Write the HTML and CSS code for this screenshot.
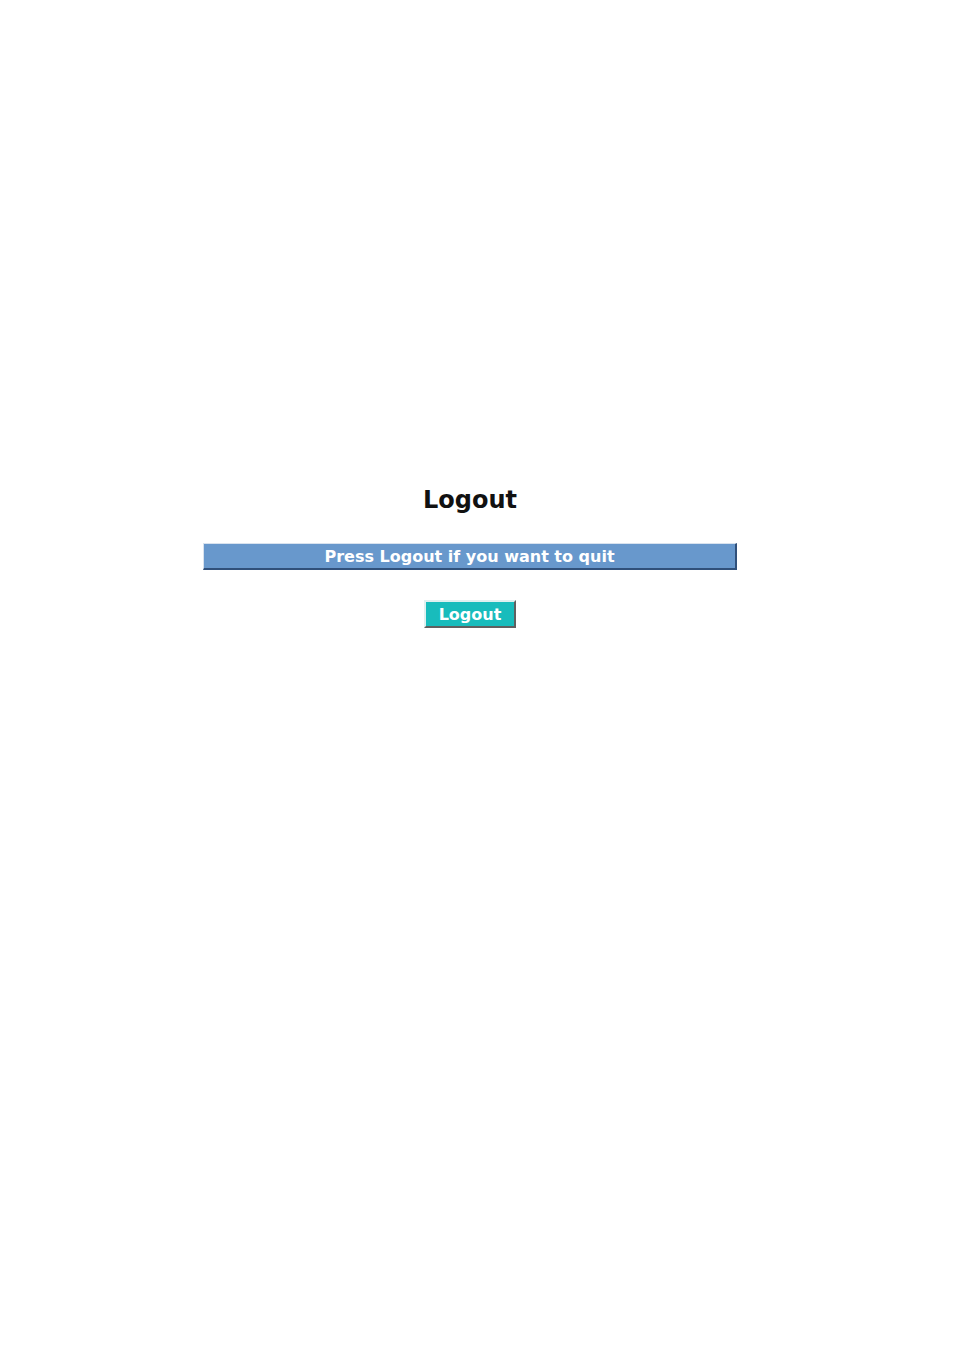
FILE: index.html
```html
<!DOCTYPE html>
<html>
<head>
<meta charset="utf-8">
<link rel="stylesheet" href="styles.css">
</head>
<body>
<div class="panel">
  <h1 class="title">Logout</h1>
  <div class="bar">Press Logout if you want to quit</div>
  <div class="actions"><button class="btn">Logout</button></div>
</div>
</body>
</html>
```
FILE: styles.css
```css
html, body {
  margin: 0;
  padding: 0;
  background: #ffffff;
}
body {
  font-family: "DejaVu Sans", Verdana, sans-serif;
}
.panel {
  width: 534px;
  margin-left: 203px;
  padding-top: 483px;
  display: flex;
  flex-direction: column;
  align-items: center;
}
.title {
  margin: 0;
  font-size: 24px;
  font-weight: bold;
  line-height: 34px;
  color: #111111;
}
.bar {
  box-sizing: border-box;
  width: 534px;
  height: 27px;
  margin-top: 26px;
  background: #6898cc;
  color: #ffffff;
  font-size: 16px;
  font-weight: bold;
  text-align: center;
  line-height: 26px;
  border-top: 1px solid #d8e2ee;
  border-left: 1px solid #d8e2ee;
  border-bottom: 2px solid #30507a;
  border-right: 2px solid #30507a;
}
.actions {
  margin-top: 30px;
}
.btn {
  box-sizing: border-box;
  width: 92px;
  height: 28px;
  padding: 0;
  background: #18bcbc;
  color: #ffffff;
  font-family: "DejaVu Sans", Verdana, sans-serif;
  font-size: 16px;
  font-weight: bold;
  border-top: 2px solid #e0f0f0;
  border-left: 2px solid #e0f0f0;
  border-bottom: 2px solid #606060;
  border-right: 2px solid #606060;
}
```
